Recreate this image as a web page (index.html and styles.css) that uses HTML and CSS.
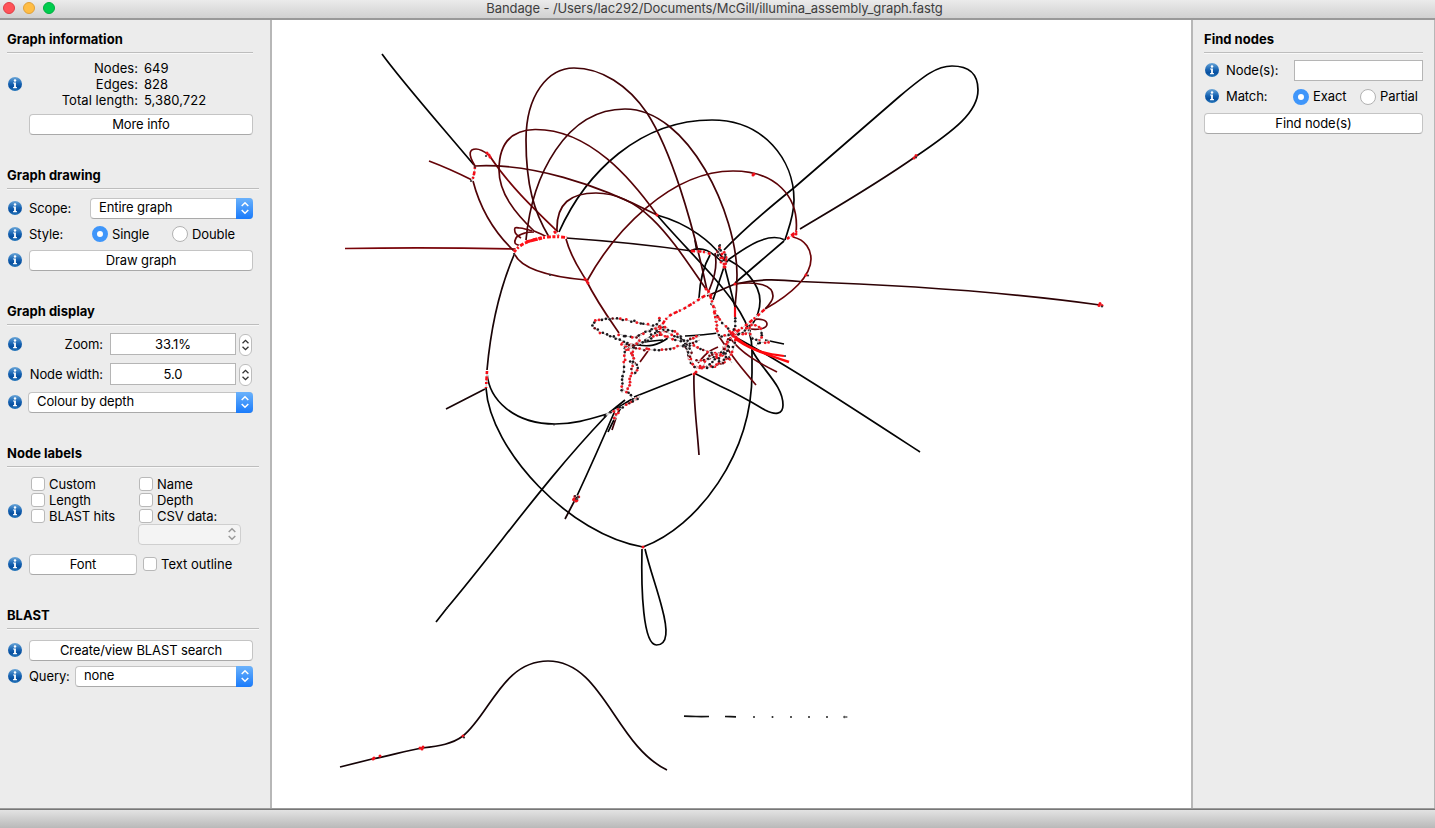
FILE: index.html
```html
<!DOCTYPE html>
<html lang="en">
<head>
<meta charset="utf-8">
<title>Bandage</title>
<link rel="stylesheet" href="styles.css">
</head>
<body>
<svg class="defs" width="0" height="0">
  <defs>
    <linearGradient id="blue" x1="0" y1="0" x2="0" y2="1"><stop offset="0" stop-color="#6ba6d8"/><stop offset=".45" stop-color="#1b67b5"/><stop offset=".7" stop-color="#074f9f"/><stop offset="1" stop-color="#2778bc"/></linearGradient>
    <symbol id="info" viewBox="0 0 14 14"><circle cx="7" cy="7" r="7" fill="url(#blue)"/><circle cx="7" cy="3.4" r="1.25" fill="#fff"/><path d="M5.1 5.5h2.8v4.6h1v1.1H5.1v-1.1h1V6.6h-1z" fill="#fff"/></symbol>
    <symbol id="arrows" viewBox="0 0 10 14"><path d="M1.7 5 5 1.8 8.3 5M1.7 9 5 12.2 8.3 9" fill="none" stroke="currentColor" stroke-width="1.5"/></symbol>
  </defs>
</svg>
<div class="window">
  <header class="titlebar">
    <div class="lights"><i class="light close"></i><i class="light minimise"></i><i class="light expand"></i></div>
    <div class="title">Bandage - /Users/lac292/Documents/McGill/illumina_assembly_graph.fastg</div>
  </header>
  <main class="body">
    <aside class="panel left">
      <section class="section information">
        <h2 class="heading short">Graph information</h2>
        <div class="row stats-row">
          <svg class="info"><use href="#info"/></svg>
          <div class="stats"><span>Nodes:</span><span>649</span><span>Edges:</span><span>828</span><span>Total length:</span><span>5,380,722</span></div>
        </div>
        <div class="button more">More info</div>
      </section>
      <section class="section drawing">
        <h2 class="heading">Graph drawing</h2>
        <div class="row"><svg class="info"><use href="#info"/></svg><span class="label scope">Scope:</span><div class="select"><span>Entire graph</span><i class="cap"><svg><use href="#arrows"/></svg></i></div></div>
        <div class="row"><svg class="info"><use href="#info"/></svg><span class="label style">Style:</span><i class="radio on"></i><span class="choice">Single</span><i class="radio"></i><span>Double</span></div>
        <div class="row"><svg class="info"><use href="#info"/></svg><div class="button">Draw graph</div></div>
      </section>
      <section class="section display">
        <h2 class="heading">Graph display</h2>
        <div class="row tall"><svg class="info"><use href="#info"/></svg><span class="label numeric">Zoom:</span><div class="field">33.1%</div><i class="stepper"><svg><use href="#arrows"/></svg></i></div>
        <div class="row tall"><svg class="info"><use href="#info"/></svg><span class="label numeric">Node width:</span><div class="field">5.0</div><i class="stepper"><svg><use href="#arrows"/></svg></i></div>
        <div class="row colour"><svg class="info"><use href="#info"/></svg><div class="select"><span>Colour by depth</span><i class="cap"><svg><use href="#arrows"/></svg></i></div></div>
      </section>
      <section class="section labels">
        <h2 class="heading">Node labels</h2>
        <div class="row checks-row"><svg class="info"><use href="#info"/></svg>
          <div class="checks">
            <div class="check"><i class="box"></i>Custom</div><div class="check"><i class="box"></i>Name</div>
            <div class="check"><i class="box"></i>Length</div><div class="check"><i class="box"></i>Depth</div>
            <div class="check"><i class="box"></i>BLAST hits</div><div class="check"><i class="box"></i>CSV data:</div>
            <div class="disabled"><svg><use href="#arrows"/></svg></div>
          </div>
        </div>
        <div class="row font-row"><svg class="info"><use href="#info"/></svg><div class="button font">Font</div><div class="check outline"><i class="box"></i>Text outline</div></div>
      </section>
      <section class="section blast">
        <h2 class="heading">BLAST</h2>
        <div class="row"><svg class="info"><use href="#info"/></svg><div class="button">Create/view BLAST search</div></div>
        <div class="row"><svg class="info"><use href="#info"/></svg><span class="label query">Query:</span><div class="select"><span>none</span><i class="cap"><svg><use href="#arrows"/></svg></i></div></div>
      </section>
    </aside>
    <svg class="graph" id="graph" viewBox="272 20 919 788"></svg>
    <aside class="panel right">
      <h2 class="heading">Find nodes</h2>
      <div class="row nodes"><svg class="info"><use href="#info"/></svg><span class="label node">Node(s):</span><div class="field"></div></div>
      <div class="row"><svg class="info"><use href="#info"/></svg><span class="label match">Match:</span><i class="radio on"></i><span class="choice">Exact</span><i class="radio"></i><span>Partial</span></div>
      <div class="button find">Find node(s)</div>
    </aside>
  </main>
  <footer class="statusbar"></footer>
</div>
<script src="graph.js"></script>
</body>
</html>
```

FILE: styles.css
```css
* { box-sizing: border-box; }
body { margin: 0; font: 13px/16px Inter, "Liberation Sans", sans-serif; letter-spacing: -.1px; color: #000; background: #ececec; }
i { font-style: normal; flex: none; }
.defs { position: absolute; }
.window { width: 1435px; height: 828px; display: flex; flex-direction: column; overflow: hidden; }
.titlebar { height: 20px; flex: none; display: flex; align-items: center; background: linear-gradient(#ebebeb, #d1d1d1); border-bottom: 2px solid #999; }
.lights { display: flex; gap: 8px; padding: 0 0 2px 3px; width: 58px; }
.light { width: 12px; height: 12px; border-radius: 50%; border: 1px solid; }
.close { background: #ff5359; border-color: #df3e45; }
.minimise { background: #ffbd45; border-color: #e0a13a; }
.expand { background: #00cd4e; border-color: #00ae40; }
.title { flex: 1; padding: 0 64px 2px 0; text-align: center; color: #3e3e3e; white-space: nowrap; }
.body { flex: 1; display: flex; min-height: 0; }
.panel { background: #ececec; flex: none; white-space: nowrap; }
.left { width: 272px; padding: 11px 0 0 7px; border-right: 2px solid #b7b7b7; }
.right { width: 244px; padding: 11px 11px 0 11px; border-left: 2px solid #b7b7b7; border-right: 1px solid #b7b7b7; }
.graph { width: 919px; height: 788px; background: #fff; flex: none; }
.section { display: flex; flex-direction: column; }
.information, .drawing { height: 136px; }
.display { height: 142px; }
.labels { height: 162px; }
.heading { font-size: 13px; line-height: 16px; font-weight: 700; letter-spacing: .02px; margin: 0 0 6px; height: 22px; width: 252px; border-bottom: 1px solid #bdbdbd; box-shadow: 0 1px #f8f8f8; }
.short { width: 246px; }
.row { display: flex; align-items: center; height: 26px; width: 246px; }
.info { width: 14px; height: 14px; flex: none; margin: 0 7px 0 1px; }
.label { flex: none; }
.stats-row { height: 48px; margin-top: 1px; }
.stats { display: grid; grid-template-columns: 109px auto; column-gap: 6px; letter-spacing: .05px; }
.stats span:nth-child(odd) { text-align: right; }
.button { flex: 1; height: 21px; line-height: 19px; text-align: center; background: #fff; border: 1px solid #c4c4c4; border-bottom-color: #a9a9a9; border-radius: 4px; }
.more { flex: none; width: 224px; margin: 6px 0 0 22px; }
.scope { width: 61px; }
.select { flex: 1; display: flex; height: 21px; line-height: 17px; padding-left: 8px; background: #fff; border: 1px solid #c4c4c4; border-bottom-color: #a9a9a9; border-right: 0; border-radius: 4px; }
.select span { flex: 1; }
.cap { width: 17px; height: 21px; margin-top: -1px; color: #fff; background: linear-gradient(#6bb2fb, #1a7bfb); border-radius: 0 4px 4px 0; display: flex; align-items: center; justify-content: center; }
.cap svg { width: 10px; height: 14px; }
.style { width: 63px; }
.radio { width: 16px; height: 16px; border-radius: 50%; background: #fff; border: 1px solid #b2b2b2; margin-right: 4px; }
.radio.on { border: 5px solid #3f96fa; }
.choice { width: 60px; }
.tall { height: 30px; }
.display .heading { margin-bottom: 4px; }
.numeric { width: 74px; text-align: right; margin-right: 7px; }
.field { width: 126px; height: 22px; line-height: 21px; border: 1px solid #b5b5b5; background: #fff; text-align: center; }
.stepper { width: 13px; height: 22px; margin: 2px 0 0 3px; border: 1px solid #bdbdbd; border-radius: 6px; background: #fff; color: #333; display: flex; align-items: center; justify-content: center; }
.stepper svg { width: 9px; height: 14px; }
.colour .info { margin-right: 6px; }
.checks-row { height: 70px; }
.checks { display: grid; grid-template-columns: 108px auto; grid-template-rows: 16px 16px 16px 21px; padding-left: 2px; }
.checks-row .info { margin-top: 2px; }
.check { display: flex; align-items: center; }
.box { width: 14px; height: 14px; margin-right: 4px; background: #fff; border: 1px solid #b9b9b9; border-radius: 3px; }
.disabled { grid-column: 2; width: 103px; margin-left: -1px; border: 1px solid #cfcfcf; border-radius: 4px; background: #f4f4f4; color: #999; display: flex; align-items: center; justify-content: flex-end; padding-right: 3px; }
.disabled svg { width: 10px; height: 14px; }
.labels .heading { margin-bottom: 8px; }
.font-row { margin-top: 6px; }
.font { flex: none; width: 108px; }
.outline { margin-left: 6px; letter-spacing: 0; }
.blast .heading { margin-bottom: 8px; }
.query { width: 46px; }
.right .heading { width: 219px; margin-bottom: 4px; }
.right .row { width: 219px; }
.right .nodes { height: 26px; }
.node { width: 68px; }
.right .field { width: 129px; height: 21px; }
.match { width: 67px; }
.right .radio { margin-top: 2px; }
.right .choice { width: 47px; }
.find { margin-top: 4px; }
.statusbar { height: 20px; flex: none; border-top: 1px solid #9b9b9b; box-shadow: inset 0 1px #777; background: linear-gradient(#e5e5e5, #b9b9b9); }
```

FILE: graph.js
```js
const NS = 'http://www.w3.org/2000/svg';
const graph = document.getElementById('graph');

// Smooth path through a list of "x,y" points; ready-made path data passes through.
function spline(text) {
  if (text[0] === 'M') return text;
  const p = text.trim().split(/\s+/).map(s => s.split(',').map(Number));
  const n = p.length - 1;
  const len = [], dir = [];
  for (let i = 0; i < n; i++) {
    len[i] = Math.hypot(p[i + 1][0] - p[i][0], p[i + 1][1] - p[i][1]);
    dir[i] = [0, 1].map(k => (p[i + 1][k] - p[i][k]) / len[i]);
  }
  const tan = p.map((_, i) => i > 0 && i < n
    ? [0, 1].map(k => (dir[i - 1][k] * len[i] + dir[i][k] * len[i - 1]) / (len[i - 1] + len[i]))
    : null);
  tan[0] = n > 1 ? [0, 1].map(k => 1.5 * dir[0][k] - 0.5 * tan[1][k]) : dir[0];
  tan[n] = n > 1 ? [0, 1].map(k => 1.5 * dir[n - 1][k] - 0.5 * tan[n - 1][k]) : dir[0];
  let d = `M${p[0]}`;
  for (let i = 0; i < n; i++) {
    const s = len[i] / 3;
    d += `C${p[i][0] + tan[i][0] * s} ${p[i][1] + tan[i][1] * s} ${p[i + 1][0] - tan[i + 1][0] * s} ${p[i + 1][1] - tan[i + 1][1] * s} ${p[i + 1]}`;
  }
  return d;
}
function line(points, colour, width = 1.7, dash = '') {
  const el = document.createElementNS(NS, 'path');
  el.setAttribute('d', spline(points));
  el.setAttribute('fill', 'none');
  el.setAttribute('stroke', colour);
  el.setAttribute('stroke-width', width);
  if (dash) el.setAttribute('stroke-dasharray', dash);
  graph.append(el);
  return el;
}
function dot(x, y, colour, r = 1.3) {
  const el = document.createElementNS(NS, 'circle');
  el.setAttribute('cx', x); el.setAttribute('cy', y); el.setAttribute('r', r); el.setAttribute('fill', colour);
  graph.append(el);
}
let seed = 7;
const random = () => (seed = (seed * 16807) % 2147483647) / 2147483647;

const black = [
  'M382,54 C400,79 430,113 474,165',
  'M559,232 C586,172 640,120 712,120 C764,120 794,160 794,200 C794,216 788,230 785,240',
  'M487,373 C489,400 514,424 555,424 C575,424 590,419 607,414',
  'M486,388 C490,450 570,535 643,547',
  'M643,547 C697,527 753,455 752,370 L752,350',
  'M642,549 C641,590 643,645 656.5,645 C668,645 668,630 662,608 C657,588 650,570 645,549',
  'M436,622 L447,608 C500,545 545,480 606,416',
  'M576,498 C590,468 602,441 617,406', '606,415 632,399', '604,417 625,400',
  'M724,250 C745,228 770,207 795,187 L900,96 C925,75 937,66 952,66 C970,66 978,75 978,90 C978,112 955,130 915,157',
  '784,241 735,283', 'M725,262 C745,248 768,231 785,240',
  'M657,215 C690,224 712,243 722,257 C745,266 760,285 760,301 C760,311 756,319 752,325',
  'M657,215 C685,248 722,282 740,312 C748,325 752,337 752,350',
  'M737,338 C785,364 840,400 920,452',
  'M699,298 C700,280 703,267 710,255', '724,267 713,300', '725,268 735,307',
  'M690,251 C702,245 712,252 722,262', '695,240 697,252',
  'M694,373 L720,386 C740,395 755,404 765,410 C775,415 783,415 783,405 C783,385 762,370 752,350',
  '692,374 634,397', '765,340 784,344', '685,336 700,335 718,333',
  '628,345 645,342 663,340', 'M632,344 C650,348 658,345 668,338', '608,432 615,418 622,406'
];
const tinted = [
  ['#180406', 'M514,255 C499,290 491,325 487,370'],
  ['#180406', '446,409 485,389'], ['#180406', '565,519 576,498'],
  ['#180406', 'M915,157 C875,185 835,208 800,229'],
  ['#180406', 'M566,238 C610,241 650,245 692,251'],
  ['#140306', 'M340,767 L372,759 C392,755 405,751 422,748 C440,746 452,744 463,736 C490,714 503,661 548,661 C603,661 615,745 667,770'],
  ['#650408', 'M429,161 C445,167 458,173 472,180'],
  ['#650408', 'M475,166 C467,153 470,149 476,149 C481,149 485,152 489,155'],
  ['#740408', 'M489,155 C508,184 533,208 558,232'],
  ['#510307', 'M475,166 C530,163 595,183 657,215'],
  ['#510307', 'M473,181 C480,208 495,233 514,251'],
  ['#790409', 'M345,248.5 C400,247.5 450,247.5 517,249'],
  ['#420307', 'M549,237 C534,212 526,185 526,140 C526,95 548,68 574,68 C601,68 628,85 647,113 C671,150 692,220 707,290'],
  ['#420307', 'M526,240 C532,175 566,109 625,109 C689,109 737,215 737,275 C737,290 736,298 735,307'],
  ['#560307', 'M534,231 C515,213 499,193 499,170 C499,142 512,130 535,129.5 C590,129 632,180 657,215'],
  ['#510307', 'M557,231 C556,203 571,193 596,193 C645,193 675,245 706,289'],
  ['#5c0307', 'M587,281 C614,232 670,171 733,171 C774,171 800,195 796,233'],
  ['#5c0307', 'M566,239 C571,258 580,270 586,280 C597,302 610,320 619,333'],
  ['#5c0307', 'M514,253 C521,270 552,277 586,280'],
  ['#2d0205', 'M1100,305 C1000,291 900,285 800,281.5 C775,279 757,279 735,284'],
  ['#6c0408', 'M793,237 C806,240 811,250 811,259 C811,276 792,294 765,309'],
  ['#540307', 'M735,284 C758,281 773,285 773,296 C773,301 769,305 765,309'],
  ['#2d0205', '707,296 735,284'], ['#42020a', 'M715,253 C718,268 713,281 708,293'],
  ['#35020a', 'M694,373 C693,400 697,425 699,455'],
  ['#67050a', '718,335 737,362 756,385'], ['#67050a', 'M730,338 C742,354 759,363 777,372'],
  ['#67050a', '532,231 520,228 515,228 515,232 521,238'],
  ['#67050a', '534,232 525,233 516,238 515,243 522,246'],
  ['#67050a', '534,231 541,234 547,237'],
  ['#67050a', 'M745,328 C756,331 767,329 767,324 C767,320 760,318 752,320'],
  ['#67050a', '636,337 650,330 662,325'], ['#67050a', '640,362 648,351'],
  ['#67050a', '698,363 710,351 718,347'], ['#42020a', '616,418 612,430']
];
const beaded = [
  'M630,345 C615,335 593,334 593,324 C593,314 650,317 690,345',
  '619,334 636,337 655,328 668,328', '625,348 640,349 658,350 680,346 700,340',
  '660,318 657,333 665,330 683,337', '640,344 660,334 667,337 685,341 700,336',
  '626,346 623,375 622,393', '633,348 632,370 628,390', '630,361 638,366 634,375',
  '628,347 645,341 663,331', '623,344 631,353 634,365', '622,390 630,394 633,399 640,396',
  '606,415 622,407 640,397', '618,413 614,420', '622,344 636,343 640,337',
  '708,290 713,305 717,325 718,335 732,335', '715,312 722,322 730,332',
  '735,318 735,325 732,335', '732,335 743,332 751,326',
  '683,340 688,352 692,365 705,367 722,363 733,350 735,335',
  '686,344 690,357 696,367 710,367 725,359', '690,345 710,352 728,358 732,363',
  '707,367 723,350 732,335', '696,361 712,358 729,347', '722,364 727,350 728,340',
  '719,362 724,347 731,339', '683,345 692,352 688,359', '703,366 713,355 724,354',
  '751,324 760,328 761,338 756,346', '750,328 752,337 759,342 770,341',
  '733,330 742,334 750,331', '720,245 718,255', '721,250 727,260 723,268', '718,256 725,262',
  '574,500 575,496 578,497 577,501 574,500'
];
const redBeads = [
  '660,329 667,318 685,308 706,295', '708,290 713,305 716,322',
  '732,335 750,322 765,309', '475,166 474,174 472,181',
  '787,239 797,231', '692,251 704,252 711,254', '487,371 486,388', '554,231 559,237'
];

black.forEach(p => line(p, '#030303'));
tinted.forEach(([c, p]) => line(p, c));

// Chains of very short nodes: beads scattered slightly around their path.
beaded.forEach(p => {
  line(p, '#fff', 2);
  const path = line(p, '#aaa', 0.8);
  const total = path.getTotalLength();
  for (let s = 0; s < total; s += 2.6 + random() * 2) {
    const at = path.getPointAtLength(s);
    const pick = random();
    dot(at.x + (random() - .5) * 2, at.y + (random() - .5) * 2, pick < .48 ? '#ee1822' : pick < .6 ? '#6b0a10' : '#1c181c', pick < .48 ? 1.4 : 1.3);
  }
});
redBeads.forEach(p => {
  line(p, '#fff', 2.2);
  line(p, '#aaa', 0.7);
  line(p, '#f40b16', 2.6, '3 2.4 4 1.6 2 3');
});
line('735,307 735,317', '#f40b16', 2.2);
line('514,252 520,246 530,241 548,237 567,237.5', '#fff', 2.5);
line('514,252 520,246 530,241 548,237 567,237.5', '#ff1018', 2.8, '3 1.7 2 2 4 1.5');
line('526,242 534,240 542,238', '#ff1018', 3.2, '4 1 7 1');
line('M735,338 C745,347 765,354 789,362', '#ff070c', 2.5);
line('M737,338 C750,350 765,354 784,356', '#ff070c', 2.2);

const red = [[489,155],[487,153],[490,157],[587,281],[585,279],[588,283],[657,215],[753,175],[754,174],[796,234],[793,236],[806,275],[735,284],[692,251],[706,289],[711,295],[914,158],[916,155.5],[1099,305.5],[1102,305.5],[1100,303.5],[643,547],[373,759],[374,758],[380,756],[420,748],[423,747],[422,749],[463,736],[576,501],[574,499],[694,374],[696,372],[723,258],[726,260],[721,262],[724,264],[722,254],[725,267],[733,336],[731,333],[736,337]];
red.forEach(([x, y]) => dot(x, y, '#f2101a', 1.5));
const dark = [[475,167],[471,181],[486,156],[514,254],[550,275],[554,424.5],[447,608],[784,240],[808,275.5],[577,499],[575,496],[578,497],[720,245],[719,249],[718,252],[725,257],[722,261],[785,356],[464,737.5],[916,157.5],[1102,306.5]];
dark.forEach(([x, y]) => dot(x, y, '#343034', 1.1));

line('684,716.2 696,716.5 709,716.5', '#111', 1.7);
line('725,716.5 736,716.8', '#111', 1.7);
[754, 772.5, 791, 809, 827].forEach(x => dot(x, 717, '#222', 1));
dot(844.5, 717, '#555', 1.3);
dot(846.5, 717, '#777', 1.1);
```
